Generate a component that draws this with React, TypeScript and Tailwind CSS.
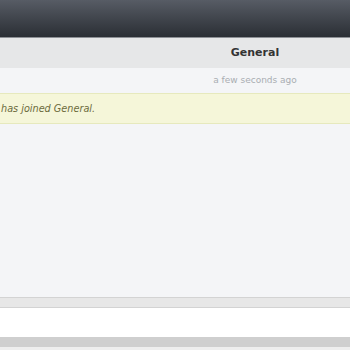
export default function App() {
  return (
    <div
      className="flex h-[350px] w-[350px] flex-col overflow-hidden bg-[#f4f5f7]"
      style={{ fontFamily: '"DejaVu Sans", Verdana, sans-serif' }}
    >
      {/* top bar */}
      <div className="h-[37px] shrink-0 bg-gradient-to-b from-[#575c65] to-[#2b2f35]" />
      <div className="h-px shrink-0 bg-[#8d9095]" />

      {/* room header */}
      <div className="flex h-[30px] shrink-0 items-center bg-[#e6e7e8]">
        <h2 className="w-[510px] shrink-0 pt-[1px] text-center text-[11px] font-bold text-[#333]">General</h2>
      </div>

      {/* messages */}
      <div className="flex flex-1 flex-col">
        <div className="flex h-[25px] items-center">
          <span className="w-[510px] shrink-0 pt-[1px] text-center text-[9px] text-[#a9adb2]">
            a few seconds ago
          </span>
        </div>
        <div className="flex h-[31px] items-center border-y border-[#e6e9bd] bg-[#f5f6d9] pl-px">
          <span className="pt-[1px] text-[9.7px] italic text-[#6c6b3c]">has joined General.</span>
        </div>
      </div>

      {/* composer */}
      <div className="h-[11px] shrink-0 border-y border-[#d3d3d3] bg-[#e7e7e7]" />
      <div className="h-[29px] shrink-0 bg-white" />
      <div className="h-[10px] shrink-0 bg-[#cfcfcf]" />
      <div className="h-[3px] shrink-0 bg-[#eeeeee]" />
    </div>
  );
}
